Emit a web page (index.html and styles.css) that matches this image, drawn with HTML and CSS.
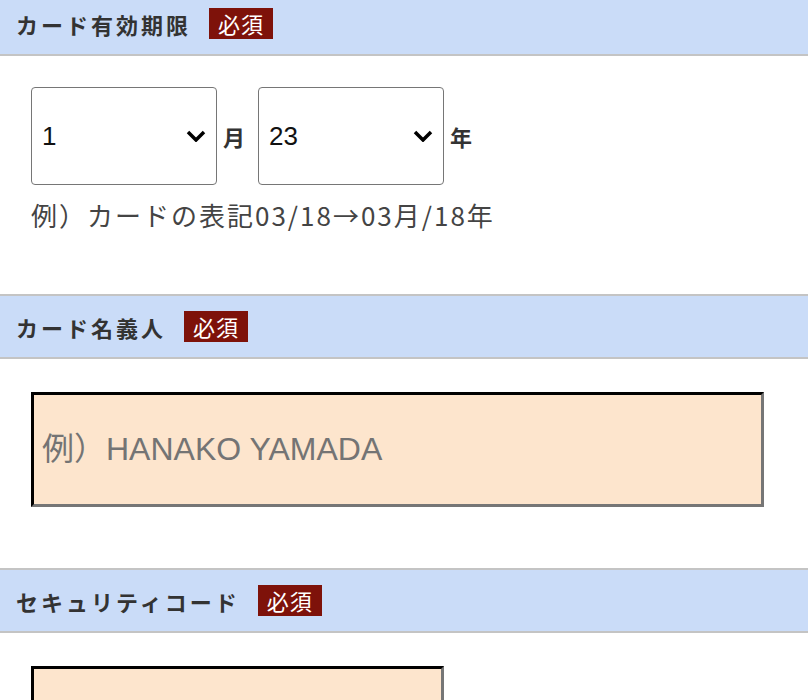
FILE: index.html
```html
<!DOCTYPE html>
<html lang="ja">
<head>
    <meta charset="UTF-8">
    <meta name="viewport" content="width=device-width, initial-scale=1.0">
    <title>カード情報</title>
    <link rel="stylesheet" href="styles.css">
</head>
<body>
    <form class="card-form">
        <section class="field">
            <h2 class="field-title">カード有効期限 <span class="required">必須</span></h2>
            <div class="field-body">
                <div class="expiry-row">
                    <select class="expiry-select" name="month">
                        <option selected>1</option>
                        <option>2</option>
                        <option>3</option>
                        <option>4</option>
                        <option>5</option>
                        <option>6</option>
                        <option>7</option>
                        <option>8</option>
                        <option>9</option>
                        <option>10</option>
                        <option>11</option>
                        <option>12</option>
                    </select>
                    <span class="unit">月</span>
                    <select class="expiry-select" name="year">
                        <option selected>23</option>
                        <option>24</option>
                        <option>25</option>
                        <option>26</option>
                        <option>27</option>
                        <option>28</option>
                    </select>
                    <span class="unit">年</span>
                </div>
                <p class="hint">例）カードの表記03/18→03月/18年</p>
            </div>
        </section>

        <section class="field">
            <h2 class="field-title">カード名義人 <span class="required">必須</span></h2>
            <div class="field-body">
                <input type="text" class="text-input name-input" placeholder="例）HANAKO YAMADA">
            </div>
        </section>

        <section class="field">
            <h2 class="field-title">セキュリティコード <span class="required">必須</span></h2>
            <div class="field-body">
                <input type="text" class="text-input code-input">
            </div>
        </section>
    </form>
</body>
</html>
```

FILE: styles.css
```css
body {
    margin: 0;
    font-family: 'Noto Sans CJK JP', 'Liberation Sans', sans-serif;
    background-color: #ffffff;
    color: #444444;
}

.card-form {
    margin-top: -9px;
}

.field-title {
    margin: 0;
    display: flex;
    align-items: center;
    height: 61px;
    padding: 0 16px;
    background-color: #cadcf8;
    border-top: 2px solid #c4c4c4;
    border-bottom: 2px solid #c4c4c4;
    font-size: 22px;
    font-weight: bold;
    letter-spacing: 3px;
    color: #333333;
}

.required {
    display: inline-block;
    margin-left: 18px;
    padding: 0 9px;
    height: 31px;
    line-height: 31px;
    background-color: #7e120a;
    color: #ffffff;
    font-size: 22px;
    font-weight: normal;
    letter-spacing: 1px;
}

.field-body {
    padding: 31px 31px 61px;
}

.expiry-row {
    display: flex;
    align-items: center;
}

.expiry-select {
    appearance: none;
    -webkit-appearance: none;
    width: 186px;
    height: 98px;
    padding: 0 10px;
    border: 1px solid #767676;
    border-radius: 4px;
    background-color: #ffffff;
    background-image: url("data:image/svg+xml,%3Csvg xmlns='http://www.w3.org/2000/svg' width='20' height='12' viewBox='0 0 20 12'%3E%3Cpath d='M2 2l8 8 8-8' fill='none' stroke='%23000' stroke-width='3.5'/%3E%3C/svg%3E");
    background-repeat: no-repeat;
    background-position: right 10px center;
    font-family: 'Liberation Sans', sans-serif;
    font-size: 26px;
    color: #111111;
}

.unit {
    margin: 0 13px 0 6px;
    font-size: 22px;
    font-weight: bold;
    color: #333333;
}

.hint {
    margin: 12px 0 0;
    font-size: 26px;
    line-height: 36px;
    letter-spacing: 2px;
    color: #444444;
}

.text-input {
    display: block;
    box-sizing: border-box;
    height: 115px;
    margin-top: 2px;
    padding: 0 8px;
    border: 3px inset #767676;
    border-top-color: #222222;
    border-left-color: #222222;
    background-color: #fde5cd;
    font-family: 'Liberation Sans', 'Noto Sans CJK JP', sans-serif;
    font-size: 32px;
    color: #333333;
}

.text-input::placeholder {
    color: #747474;
}

.name-input {
    width: 733px;
}

.code-input {
    width: 413px;
}
```
